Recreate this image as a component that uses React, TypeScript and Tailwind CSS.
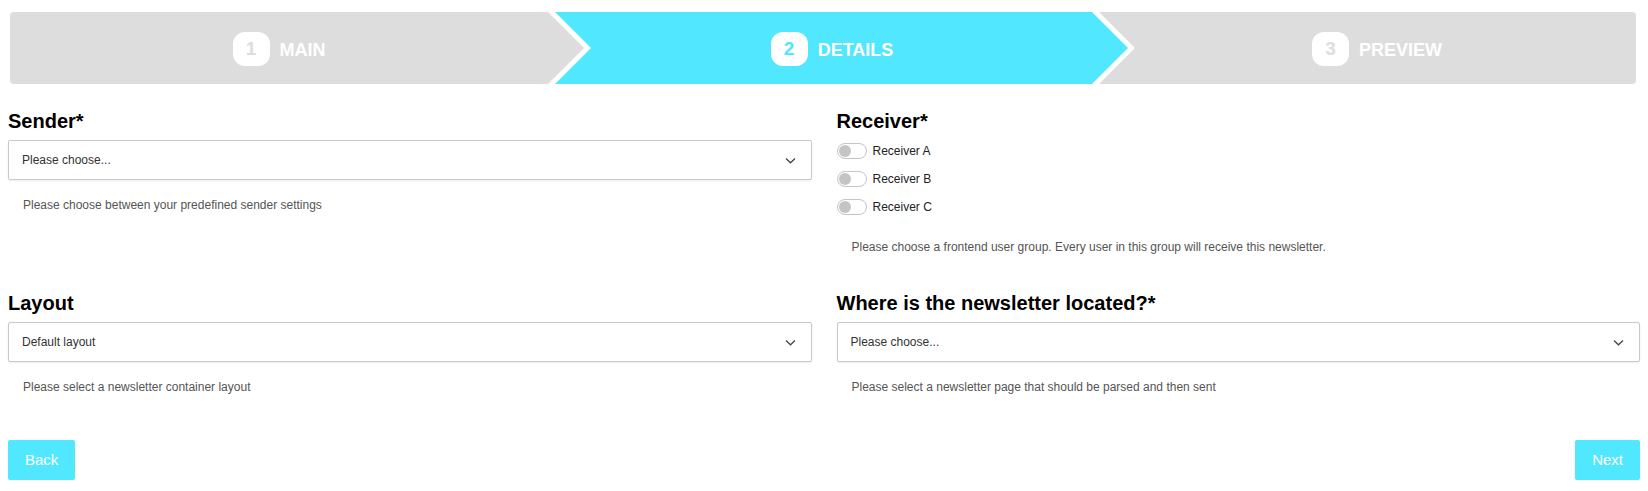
import React from "react";

const CYAN = "#50e7ff";

function Chevron() {
  return (
    <svg width="11" height="7" viewBox="0 0 11 7" className="shrink-0">
      <polyline points="1,1.5 5.5,5.8 10,1.5" fill="none" stroke="#444" strokeWidth="1.2" />
    </svg>
  );
}

function Select({ value }: { value: string }) {
  return (
    <div className="flex h-[40px] items-center justify-between rounded-[2px] border border-[#c9c9c9] bg-white pl-[13px] pr-[15px] text-[12px] text-[#333] shadow-[0_1px_2px_rgba(0,0,0,0.08)]">
      <span>{value}</span>
      <Chevron />
    </div>
  );
}

function Help({ children, mt = "mt-[16px]" }: { children: React.ReactNode; mt?: string }) {
  return <p className={`${mt} pl-[15px] text-[12px] leading-[18px] text-[#555]`}>{children}</p>;
}

function Heading({ children }: { children: React.ReactNode }) {
  return <h2 className="text-[20px] font-bold leading-[24px] text-black">{children}</h2>;
}

function Toggle({ label }: { label: string }) {
  return (
    <div className="flex h-[28px] items-center gap-[6px]">
      <div className="flex h-[16px] w-[30px] items-center rounded-full border border-[#c4c4c4] bg-white">
        <div className="ml-[1px] h-[12px] w-[12px] rounded-full bg-[#c4c4c4]" />
      </div>
      <span className="text-[12px] text-[#222]">{label}</span>
    </div>
  );
}

function StepLabel({ n, label, numColor }: { n: string; label: string; numColor: string }) {
  return (
    <div className="flex items-center gap-[10px] pt-[2px]">
      <div
        className="flex h-[34px] w-[37px] items-center justify-center rounded-[12px] bg-white text-[19px] font-bold"
        style={{ color: numColor }}
      >
        {n}
      </div>
      <span className="pt-[3px] text-[18px] font-bold text-white">{label}</span>
    </div>
  );
}

export default function App() {
  return (
    <div className="w-[1648px] bg-white px-2 pt-3 font-['Liberation_Sans',Arial,sans-serif]">
      {/* Stepper */}
      <div className="ml-[2px] flex h-[72px] w-[1626px]">
        <div className="flex h-full w-[574px] items-center justify-center rounded-l-[4px] bg-[#dddddd] pr-[36px] [clip-path:polygon(0_0,calc(100%-36px)_0,100%_50%,calc(100%-36px)_100%,0_100%)]">
          <StepLabel n="1" label="MAIN" numColor="#dddddd" />
        </div>
        <div className="-ml-[29px] flex h-full w-[573px] items-center justify-center bg-[#50e7ff] pr-[19px] [clip-path:polygon(0_0,calc(100%-36px)_0,100%_50%,calc(100%-36px)_100%,0_100%,36px_50%)]">
          <StepLabel n="2" label="DETAILS" numColor={CYAN} />
        </div>
        <div className="-ml-[29px] flex h-full w-[537px] items-center justify-center rounded-r-[4px] bg-[#dddddd] pl-[19px] [clip-path:polygon(0_0,100%_0,100%_100%,0_100%,36px_50%)]">
          <StepLabel n="3" label="PREVIEW" numColor="#dddddd" />
        </div>
      </div>

      {/* Form */}
      <div className="mt-[25px] grid grid-cols-2 gap-x-[25px] gap-y-[35px]">
        <div>
          <Heading>Sender*</Heading>
          <div className="mt-[7px]">
            <Select value="Please choose..." />
          </div>
          <Help>Please choose between your predefined sender settings</Help>
        </div>
        <div>
          <Heading>Receiver*</Heading>
          <div className="mt-[4px] flex flex-col">
            <Toggle label="Receiver A" />
            <Toggle label="Receiver B" />
            <Toggle label="Receiver C" />
          </div>
          <Help mt="mt-[17px]">
            Please choose a frontend user group. Every user in this group will receive this newsletter.
          </Help>
        </div>
        <div>
          <Heading>Layout</Heading>
          <div className="mt-[7px]">
            <Select value="Default layout" />
          </div>
          <Help>Please select a newsletter container layout</Help>
        </div>
        <div>
          <Heading>Where is the newsletter located?*</Heading>
          <div className="mt-[7px]">
            <Select value="Please choose..." />
          </div>
          <Help>Please select a newsletter page that should be parsed and then sent</Help>
        </div>
      </div>

      {/* Buttons */}
      <div className="mt-[44px] flex justify-between pb-[12px]">
        <button className="h-[40px] rounded-[2px] bg-[#50e7ff] px-[17px] text-[15px] text-white">Back</button>
        <button className="h-[40px] rounded-[2px] bg-[#50e7ff] px-[17px] text-[15px] text-white">Next</button>
      </div>
    </div>
  );
}
